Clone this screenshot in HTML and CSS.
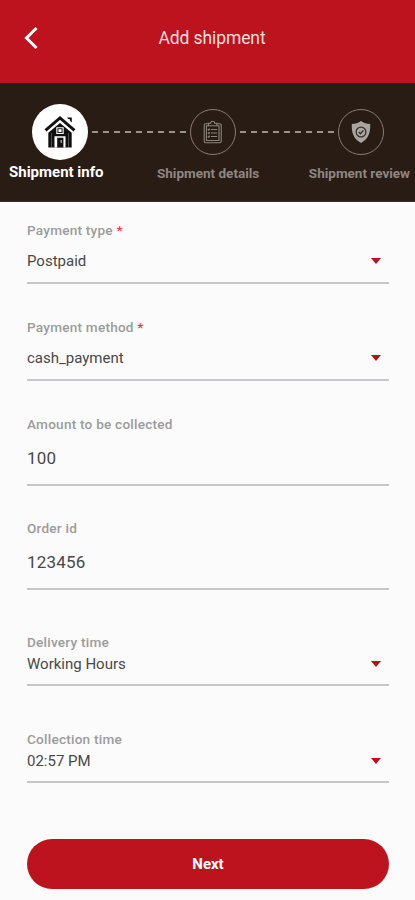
FILE: index.html
```html
<!DOCTYPE html>
<html lang="en">
<head>
<meta charset="utf-8">
<meta name="viewport" content="width=device-width, initial-scale=1">
<title>Add shipment</title>
<link rel="stylesheet" href="styles.css">
</head>
<body>
<header class="topbar">
  <svg class="back" viewBox="0 0 14 24" fill="none" stroke="#fff" stroke-width="3"><path d="M12.500 2 2.500 12l10 10"/></svg>
  <h1 class="title">Add shipment</h1>
</header>
<nav class="stepper">
  <div class="rail">
    <span class="dot dot-active">
      <svg width="32" height="34" viewBox="0 0 32 34">
        <path fill="#111" d="M23 2.500h4.800v5l-1.800-1.700V4.300h-1.500z"/>
        <path fill="#111" d="M4.300 17.800 16 8l11.700 9.800v14.700H4.300z"/>
        <path fill="none" stroke="#fff" stroke-width="1" d="M3 17.200 16 6l13 11.200"/>
        <path fill="none" stroke="#111" stroke-width="2.900" d="M1.500 15.400 16 2.900l14.500 12.500"/>
        <path fill="#fff" d="M12.300 12.200h7.400v6.900h-7.400zM10.500 21.300h11v11.200h-11z"/>
        <path fill="#111" d="M13.400 13.300h5.200V18h-5.200zM13.200 22.800h6.200v9.700h-6.200z"/>
        <path fill="#fff" d="M14.400 14.200h3.200v2.900h-3.200z"/>
        <path fill="#999" d="M16.500 25h1.500v3h-1.500z"/>
        <path fill="none" stroke="#777" stroke-width=".6" d="M7.500 18v14M24.500 18v14"/>
      </svg>
    </span>
    <span class="line"></span>
    <span class="dot">
      <svg width="20" height="24" viewBox="0 0 20 24" fill="none" stroke="#8b827d" stroke-width="1.1">
        <rect x="1.2" y="3.7" width="17" height="19" rx="1.4"/>
        <path fill="#291c15" d="M5.5 5.7V3.2h2.2a2 2 0 0 1 4 0h2.2v2.500z"/>
        <path d="M5.500 5.700H3.400v14.800H16V5.700h-2.100M8 9.500h6.200M8 13h6.200M8 16.500h6.200M4.800 9.200l.9.900 1.200-1.500M4.800 12.700l.9.900 1.200-1.500M4.800 16.200l.9.900 1.200-1.500"/>
      </svg>
    </span>
    <span class="line"></span>
    <span class="dot">
      <svg width="20" height="24" viewBox="0 0 20 24">
        <path fill="#aaa5a1" d="M10 1c2.500 2.100 5.800 3 9.200 3 .4 8.500-1.700 14.800-9.200 19C2.500 18.800.400 12.500.800 4 4.200 4 7.500 3.100 10 1z"/>
        <circle cx="10" cy="12" r="4.900" fill="none" stroke="#3b302a" stroke-width="1.300"/>
        <path d="m7.800 12.100 1.600 1.600 3-3.300" fill="none" stroke="#3b302a" stroke-width="1.400"/>
      </svg>
    </span>
  </div>
  <div class="labels">
    <span class="label label-active">Shipment info</span>
    <span class="label">Shipment details</span>
    <span class="label">Shipment review</span>
  </div>
</nav>
<main class="form">
  <div class="field roomy">
    <div class="name">Payment type <b class="req">*</b></div>
    <div class="value"><span>Postpaid</span><i class="caret"></i></div>
  </div>
  <div class="field roomy">
    <div class="name">Payment method <b class="req">*</b></div>
    <div class="value"><span>cash_payment</span><i class="caret"></i></div>
  </div>
  <div class="field input">
    <div class="name">Amount to be collected</div>
    <div class="value">100</div>
  </div>
  <div class="field input">
    <div class="name">Order id</div>
    <div class="value">123456</div>
  </div>
  <div class="field snug">
    <div class="name">Delivery time</div>
    <div class="value"><span>Working Hours</span><i class="caret"></i></div>
  </div>
  <div class="field snug">
    <div class="name">Collection time</div>
    <div class="value"><span>02:57 PM</span><i class="caret"></i></div>
  </div>
  <button class="next" type="button">Next</button>
</main>
</body>
</html>
```
FILE: styles.css
```css
* { box-sizing: border-box; }
body {
  margin: 0;
  height: 900px;
  background: #fbfbfb;
  font-family: Roboto, sans-serif;
  overflow: hidden;
}
.topbar {
  display: grid;
  grid-template-columns: 24px 1fr 24px;
  align-items: center;
  height: 83px;
  padding: 0 15px 8px 24px;
  background: #bd131f;
}
.back { width: 14px; height: 24px; }
.title {
  margin: 0;
  text-align: center;
  color: #fbdcdc;
  font-size: 17.5px;
  font-weight: 400;
  line-height: 24px;
  letter-spacing: -.1px;
}
.stepper {
  height: 119px;
  padding-top: 21px;
  background: #291c15;
  border-bottom: 1px solid #3d302b;
}
.rail {
  display: flex;
  align-items: center;
  height: 56px;
  padding: 0 31px 0 32px;
}
.dot {
  display: flex;
  align-items: center;
  justify-content: center;
  flex: none;
  width: 46px;
  height: 46px;
  border: 1px solid #8b7d76;
  border-radius: 50%;
}
.dot-active {
  width: 56px;
  height: 56px;
  border: 0;
  background: #fff;
}
.line {
  flex: 1;
  height: 2px;
  margin: 0 4px;
  background: repeating-linear-gradient(90deg, #9a928d 0 6px, transparent 6px 11px);
}
.labels {
  display: grid;
  grid-template-columns: 148px 1fr auto;
  padding: 3px 5px 0 9px;
}
.label {
  color: #8f8681;
  font-size: 13.5px;
  font-weight: 700;
  line-height: 20px;
}
.label-active { color: #fff; font-size: 15px; line-height: 19px; }
.form {
  display: flex;
  flex-direction: column;
  padding: 18px 26px 0 27px;
}
.field {
  border-bottom: 2px solid #c6c6cb;
}
.name {
  color: #9b9b9b;
  font-size: 13.6px;
  font-weight: 500;
  line-height: 20px;
  letter-spacing: .22px;
}
.req { color: #e8443f; font-weight: 700; }
.value {
  display: flex;
  align-items: center;
  justify-content: space-between;
  color: #484848;
  font-size: 15px;
  line-height: 20px;
}
.caret {
  width: 10px;
  height: 6px;
  margin-right: 8px;
  background: #b8101b;
  clip-path: polygon(0 0, 100% 0, 50% 100%);
}
.roomy { height: 64px; margin-bottom: 33px; }
.roomy .value { margin-top: 11px; }
.input { height: 72px; margin-bottom: 32px; }
.input .value { margin-top: 14px; font-size: 17px; letter-spacing: .2px; }
.snug { height: 54px; margin-bottom: 43px; }
.input + .snug { margin-top: 10px; }
.snug .value { margin-top: 2px; }
.next {
  height: 50px;
  margin-top: 13px;
  border: 0;
  border-radius: 25px;
  background: #bd131f;
  color: #fff;
  font: 700 15px/20px Roboto, sans-serif;
}
```
